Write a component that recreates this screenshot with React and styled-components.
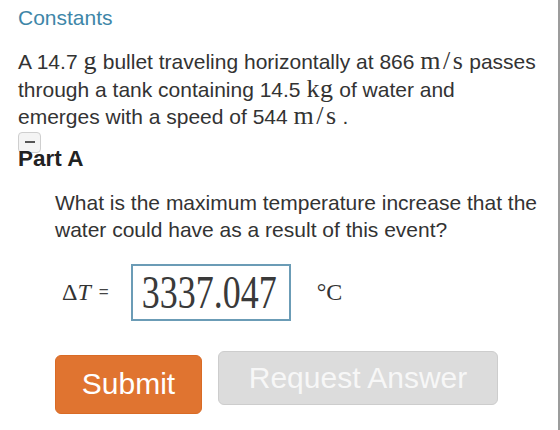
import styled, { createGlobalStyle } from "styled-components"

const Global = createGlobalStyle`
  html, body {
    margin: 0;
    padding: 0;
    background: #fff;
  }
`;

const Page = styled.div`
  box-sizing: border-box;
  width: 560px;
  min-height: 430px;
  padding: 4px 18px 0 18px;
  border-right: 2px solid #9c9c9c;
  font-family: "Liberation Sans", Arial, sans-serif;
  color: #333;
`;

const ConstantsLink = styled.a`
  display: block;
  font-size: 21px;
  line-height: 28px;
  color: #3e86a8;
  text-decoration: none;
  cursor: pointer;
`;

const Intro = styled.p`
  margin: 16px 0 0;
  font-size: 21px;
  line-height: 27.5px;
`;

const M = styled.span`
  font-family: "Liberation Serif", "Times New Roman", serif;
  font-size: 26px;
  line-height: 1;
  letter-spacing: 0.5px;
`;

const Slash = styled.span`
  margin: 0 2px;
`;

const PartHeader = styled.div`
  position: relative;
  margin-top: 14px;
`;

const Collapse = styled.button`
  position: absolute;
  left: 0;
  top: -13px;
  width: 23px;
  height: 21px;
  padding: 0;
  border: 1px solid #cfcfcf;
  border-radius: 4px;
  background: #f4f4f4;
  display: flex;
  justify-content: center;
  padding-top: 8px;
  box-sizing: border-box;
  &::before {
    content: "";
    width: 10px;
    height: 2px;
    background: #555;
  }
`;

const PartTitle = styled.h2`
  position: relative;
  margin: 0;
  font-size: 22.5px;
  line-height: 28px;
  font-weight: bold;
  color: #222;
`;

const Body = styled.div`
  padding-left: 37px;
`;

const Question = styled.p`
  margin: 16px 0 0;
  font-size: 21px;
  line-height: 27px;
`;

const AnswerRow = styled.div`
  display: flex;
  align-items: center;
  margin-top: 21px;
  padding-left: 7px;
`;

const Label = styled.span`
  font-family: "Liberation Serif", "Times New Roman", serif;
  font-size: 24px;
  color: #333;
`;

const Eq = styled.span`
  font-family: "Liberation Sans", Arial, sans-serif;
  font-size: 17px;
  margin-left: 8px;
  color: #444;
`;

const AnswerBox = styled.div`
  box-sizing: border-box;
  width: 160px;
  height: 57px;
  margin-left: 22px;
  padding-left: 9px;
  border: 2px solid #6b9cb6;
  display: flex;
  align-items: center;
`;

const AnswerValue = styled.span`
  display: inline-block;
  font-family: "Liberation Serif", "Times New Roman", serif;
  font-size: 36px;
  color: #3a3a3a;
  transform: scaleY(1.3);
  transform-origin: center;
`;

const Unit = styled.span`
  margin-left: 26px;
  font-family: "Liberation Serif", "Times New Roman", serif;
  font-size: 24px;
  color: #333;
`;

const Actions = styled.div`
  display: flex;
  align-items: flex-start;
  gap: 16px;
  margin-top: 30px;
`;

const Button = styled.button`
  box-sizing: border-box;
  height: ${(p) => (p.$primary ? "59px" : "54px")};
  margin-top: ${(p) => (p.$primary ? "4px" : "0")};
  padding: 0 ${(p) => (p.$primary ? "25px" : "24px")};
  min-width: ${(p) => (p.$primary ? "147px" : "280px")};
  border-radius: 6px;
  border: 1px solid ${(p) => (p.$primary ? "#d96b25" : "#cdcdcd")};
  background: ${(p) => (p.$primary ? "#e07430" : "#dcdcdc")};
  color: ${(p) => (p.$primary ? "#fff" : "#f7f7f7")};
  font-family: "Liberation Sans", Arial, sans-serif;
  font-size: 30px;
  cursor: ${(p) => (p.$primary ? "pointer" : "default")};
`;

export default function App() {
  return (
    <Page>
      <Global />
      <ConstantsLink>Constants</ConstantsLink>
      <Intro>
        A 14.7 <M>g</M> bullet traveling horizontally at 866{" "}
        <M>
          m<Slash>/</Slash>s
        </M>{" "}
        passes through a tank containing 14.5 <M>kg</M> of water and emerges
        with a speed of 544{" "}
        <M>
          m<Slash>/</Slash>s
        </M>{" "}
        .
      </Intro>

      <PartHeader>
        <Collapse aria-label="collapse" />
        <PartTitle>Part A</PartTitle>
      </PartHeader>

      <Body>
        <Question>
          What is the maximum temperature increase that the water could have
          as a result of this event?
        </Question>

        <AnswerRow>
          <Label>
            Δ<i>T</i>
          </Label>
          <Eq>=</Eq>
          <AnswerBox>
            <AnswerValue>3337.047</AnswerValue>
          </AnswerBox>
          <Unit>°C</Unit>
        </AnswerRow>

        <Actions>
          <Button $primary>Submit</Button>
          <Button disabled>Request Answer</Button>
        </Actions>
      </Body>
    </Page>
  )
}
